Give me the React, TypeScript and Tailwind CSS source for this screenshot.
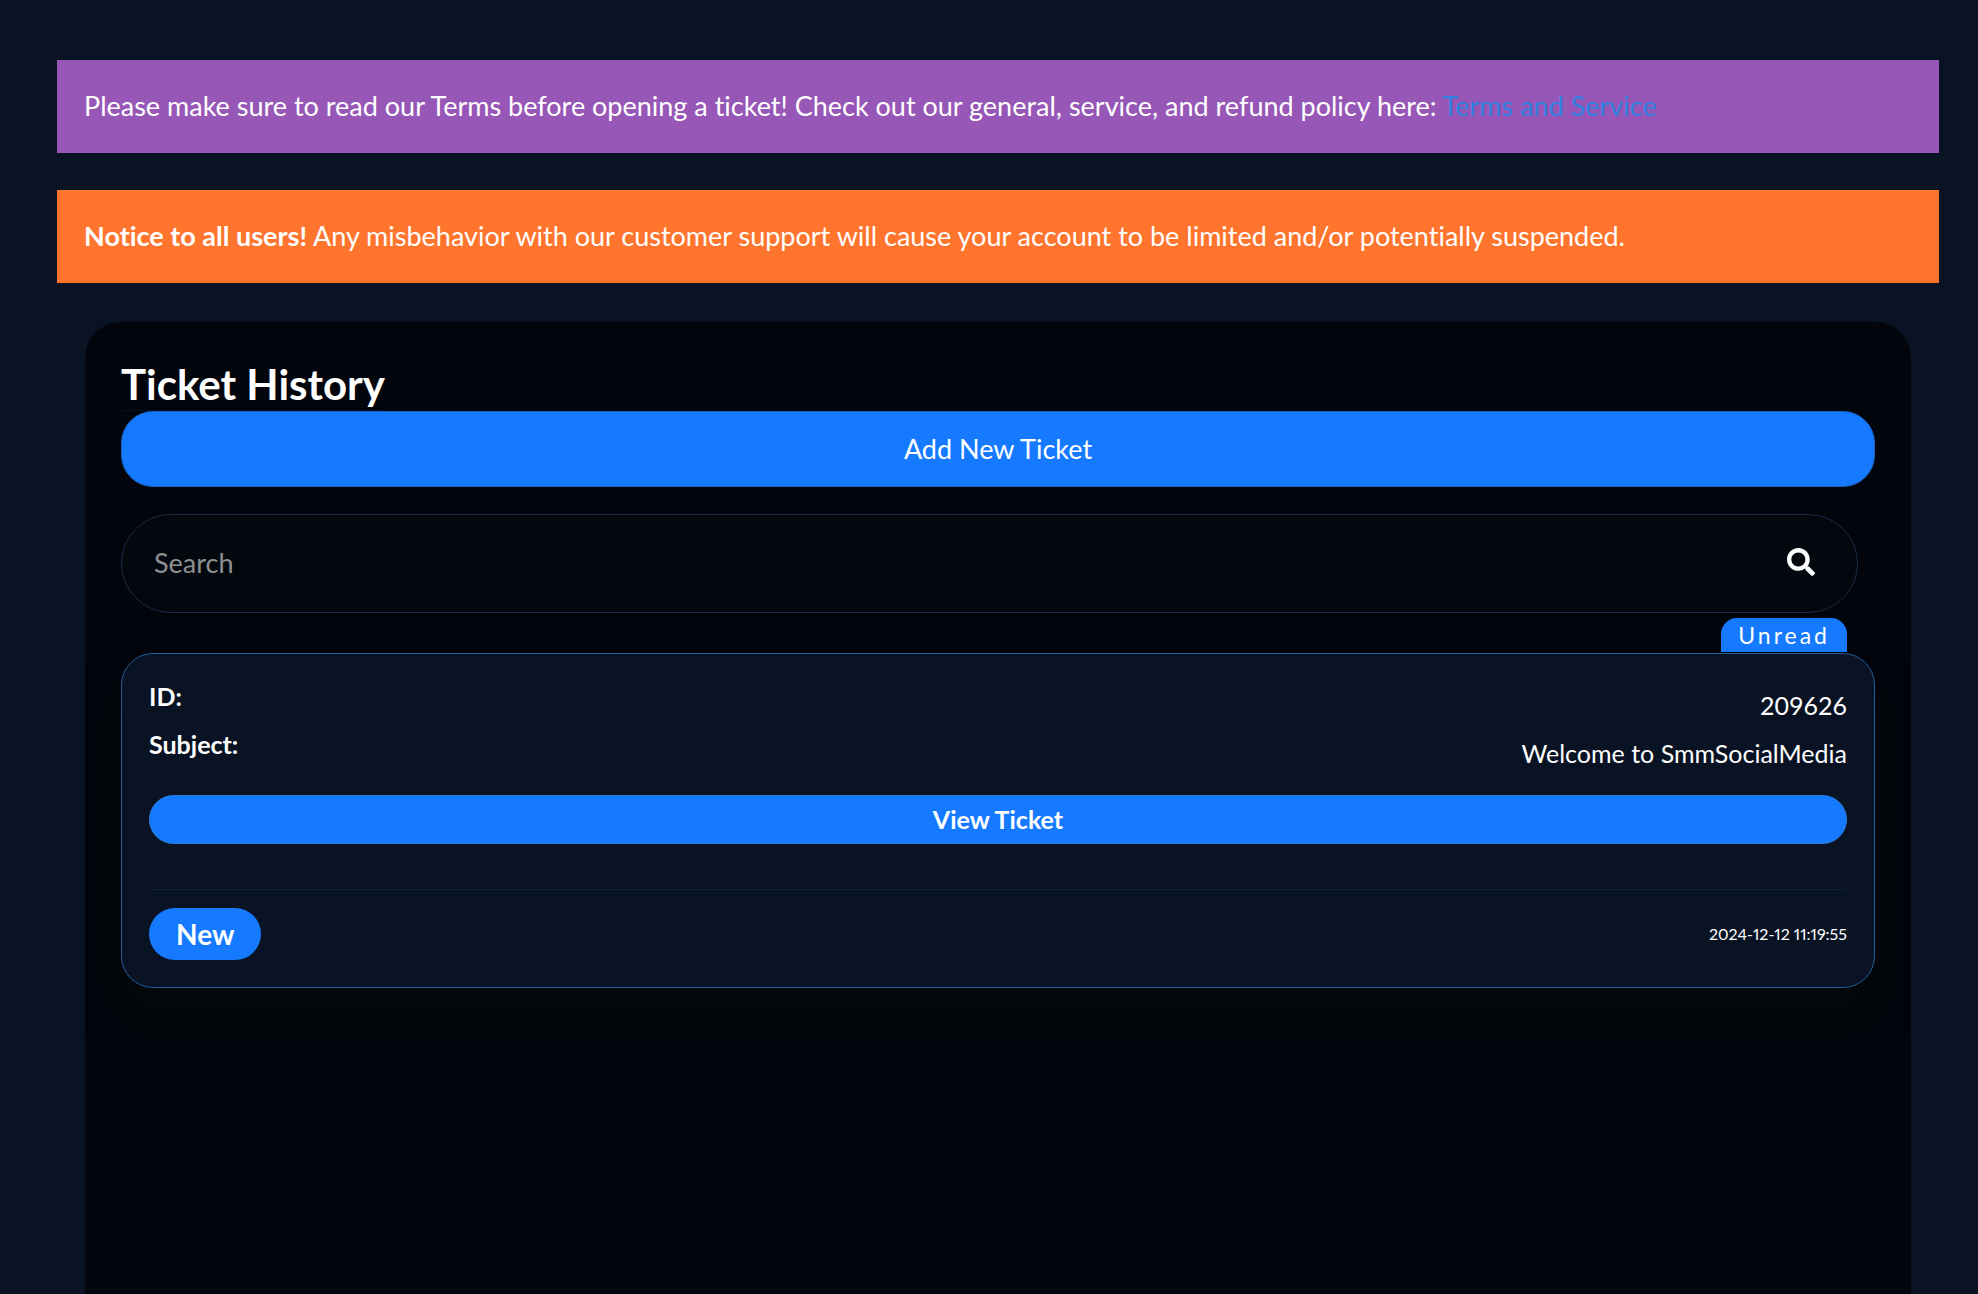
import type { ReactNode } from 'react';
import { FaSearch } from 'react-icons/fa';

type Ticket = {
  id: string;
  subject: string;
  status: string;
  unread: boolean;
  updatedAt: string;
};

const tickets: Ticket[] = [
  {
    id: '209626',
    subject: 'Welcome to SmmSocialMedia',
    status: 'New',
    unread: true,
    updatedAt: '2024-12-12 11:19:55',
  },
];

function TicketRow({ label, children }: { label: string; children: ReactNode }) {
  return (
    <div className="flex items-start justify-between">
      <dt className="text-[25px] leading-[30px] font-bold">{label}</dt>
      <dd className="text-[25px] leading-[48px]">{children}</dd>
    </div>
  );
}

function TicketCard({ ticket }: { ticket: Ticket }) {
  return (
    <article className="relative rounded-[32px] border border-[#235c9a] bg-[#0a1324] p-[27px] shadow-[0_30px_40px_#05090b]">
      {ticket.unread && (
        <span className="absolute right-[27px] bottom-full mb-0.5 rounded-t-2xl bg-[#157aff] px-[17px] text-[23px] leading-[34px] tracking-[3px]">
          Unread
        </span>
      )}
      <dl>
        <TicketRow label="ID:">{ticket.id}</TicketRow>
        <TicketRow label="Subject:">{ticket.subject}</TicketRow>
      </dl>
      <button
        type="button"
        className="mt-[18px] h-[49px] w-full rounded-full border border-[#2a7fe0] bg-[#157aff] text-[25px] font-bold"
      >
        View Ticket
      </button>
      <div className="mt-[45px] flex items-center justify-between border-t border-[#0c2039] pt-[18px]">
        <span className="rounded-full bg-[#157aff] px-[27px] text-[28px] leading-[52px] font-bold">
          {ticket.status}
        </span>
        <time className="text-[16px] proportional-nums">{ticket.updatedAt}</time>
      </div>
    </article>
  );
}

export default function App() {
  return (
    <div className="flex min-h-screen flex-col bg-[#091323] pt-[60px] pr-[39px] pl-[57px] font-['Lato',sans-serif] text-white [font-variant-ligatures:none]">
      <p className="mb-[37px] bg-[#9757b7] px-[27px] pt-[23px] pb-[25px] text-[27px] leading-[45px]">
        Please make sure to read our Terms before opening a ticket! Check out our general, service, and refund policy
        here:{' '}
        <a href="#terms" className="text-[#2f80e0]">
          Terms and Service
        </a>
      </p>
      <p className="mb-[39px] bg-[#ff752e] px-[27px] pt-[23px] pb-[25px] text-[27px] leading-[45px]">
        <strong className="font-bold">Notice to all users!</strong> Any misbehavior with our customer support will cause
        your account to be limited and/or potentially suspended.
      </p>

      <main className="mx-7 flex-1 overflow-hidden rounded-t-[36px] bg-[#02050c] p-9">
        <h1 className="w-fit border-b border-[#031128] text-[42px] leading-[52px] font-bold">Ticket History</h1>
        <button
          type="button"
          className="h-[76px] w-full rounded-[32px] border border-[#1a62c0] bg-[#157aff] text-[27px]"
        >
          Add New Ticket
        </button>

        <form
          className="mt-[27px] mr-[17px] mb-10 flex h-[99px] items-center rounded-full border border-[#1a2c49] bg-[#02080e] pr-[42px] pl-8"
          onSubmit={(e) => e.preventDefault()}
        >
          <input
            type="search"
            aria-label="Search"
            placeholder="Search"
            className="min-w-0 flex-1 bg-transparent text-[27px] outline-none placeholder:text-[#8f9091]"
          />
          <button type="submit" aria-label="Submit search" className="pb-1">
            <FaSearch className="size-7" />
          </button>
        </form>

        {tickets.map((ticket) => (
          <TicketCard key={ticket.id} ticket={ticket} />
        ))}
      </main>
    </div>
  );
}
